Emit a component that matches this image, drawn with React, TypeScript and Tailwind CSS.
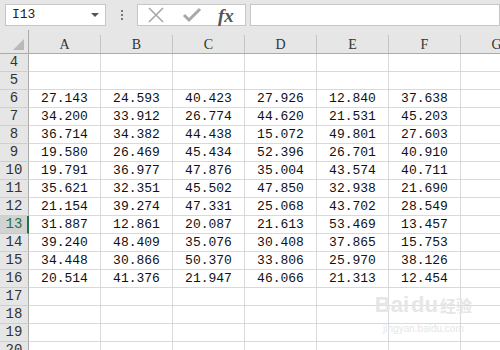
import React from "react";

const cols = ["A", "B", "C", "D", "E", "F", "G"];

const data: Record<number, string[]> = {
  6: ["27.143", "24.593", "40.423", "27.926", "12.840", "37.638"],
  7: ["34.200", "33.912", "26.774", "44.620", "21.531", "45.203"],
  8: ["36.714", "34.382", "44.438", "15.072", "49.801", "27.603"],
  9: ["19.580", "26.469", "45.434", "52.396", "26.701", "40.910"],
  10: ["19.791", "36.977", "47.876", "35.004", "43.574", "40.711"],
  11: ["35.621", "32.351", "45.502", "47.850", "32.938", "21.690"],
  12: ["21.154", "39.274", "47.331", "25.068", "43.702", "28.549"],
  13: ["31.887", "12.861", "20.087", "21.613", "53.469", "13.457"],
  14: ["39.240", "48.409", "35.076", "30.408", "37.865", "15.753"],
  15: ["34.448", "30.866", "50.370", "33.806", "25.970", "38.126"],
  16: ["20.514", "41.376", "21.947", "46.066", "21.313", "12.454"],
};

const rows = Array.from({ length: 17 }, (_, i) => i + 4);

function FormulaBar() {
  return (
    <div className="flex h-[30px] items-start bg-[#e6e6e6] pt-[4px]">
      <div className="ml-[5px] flex h-[22px] w-[101px] items-center justify-between border border-[#c6c6c6] bg-white pl-[6px] pr-[6px]">
        <span className="text-[13px] text-[#222]">I13</span>
        <svg width="8" height="5" viewBox="0 0 8 5">
          <path d="M0 0 L8 0 L4 4 Z" fill="#555" />
        </svg>
      </div>
      <div className="flex h-[22px] w-[31px] flex-col items-center justify-center gap-[2px]">
        <span className="h-[2px] w-[2px] bg-[#777]" />
        <span className="h-[2px] w-[2px] bg-[#777]" />
        <span className="h-[2px] w-[2px] bg-[#777]" />
      </div>
      <div className="flex h-[22px] w-[109px] items-center border border-[#c6c6c6] bg-white pl-[9px]">
        <svg width="18" height="16" viewBox="0 0 18 16">
          <path d="M2 1 L16 15 M16 1 L2 15" stroke="#a8a8a8" strokeWidth="1.6" />
        </svg>
        <svg className="ml-[17px]" width="20" height="16" viewBox="0 0 20 16">
          <path d="M2 8 L7 13 L18 2" stroke="#a8a8a8" strokeWidth="3" fill="none" />
        </svg>
        <span className="ml-[16px] font-['Liberation_Serif',serif] text-[19px] font-bold italic leading-none text-[#555]">
          fx
        </span>
      </div>
      <div className="ml-[4px] h-[22px] flex-1 border border-[#c6c6c6] bg-white" />
    </div>
  );
}

function HeaderRow() {
  return (
    <div className="flex h-[24px] border-b border-[#ababab] bg-[#e6e6e6]">
      <div className="relative w-[29px] shrink-0 border-r border-[#ababab]">
        <svg className="absolute bottom-[3px] right-[4px]" width="11" height="11" viewBox="0 0 11 11">
          <path d="M11 0 L11 11 L0 11 Z" fill="#b9b9b9" />
        </svg>
      </div>
      {cols.map((c) => (
        <div key={c} className="flex w-[72px] shrink-0 items-end">
          <div className="flex h-[18px] flex-1 items-center justify-center font-['Liberation_Serif',serif] text-[14px] text-[#333]">
            {c}
          </div>
          <div className="h-[18px] w-px bg-[#c4c4c4]" />
        </div>
      ))}
    </div>
  );
}

function Row({ n }: { n: number }) {
  const values = data[n] ?? [];
  const active = n === 13;
  return (
    <div className="flex h-[18px]">
      <div
        className={
          active
            ? "flex w-[29px] shrink-0 items-center justify-center border-b border-r-2 border-b-[#c8c8c8] border-r-[#217346] bg-[#d2d2d2] pl-[1px] text-[14px] text-[#217346]"
            : "flex w-[29px] shrink-0 items-center justify-center border-b border-r border-b-[#cfcfcf] border-r-[#ababab] bg-[#e6e6e6] text-[14px] text-[#333]"
        }
      >
        {n}
      </div>
      {cols.map((c, i) => (
        <div
          key={c}
          className="flex w-[72px] shrink-0 items-center justify-center border-b border-r border-[#d9d9d9] bg-white text-[13px] text-[#111]"
        >
          {values[i] ?? ""}
        </div>
      ))}
    </div>
  );
}

export default function App() {
  return (
    <div className="relative h-[350px] w-[500px] overflow-hidden bg-white font-['Liberation_Mono',monospace]">
      <FormulaBar />
      <HeaderRow />
      {rows.map((n) => (
        <Row key={n} n={n} />
      ))}
      <div className="pointer-events-none absolute bottom-[14px] right-[28px] flex flex-col items-center text-[#e6e6e6]">
        <div className="flex items-baseline gap-[2px] font-['Liberation_Sans',sans-serif]">
          <span className="text-[22px] font-bold">Bai</span>
          <span className="text-[22px] font-bold">du</span>
          <span className="font-['Noto_Sans_CJK_SC',sans-serif] text-[16px] font-bold">经验</span>
        </div>
        <span className="font-['Liberation_Sans',sans-serif] text-[10px]">jingyan.baidu.com</span>
      </div>
    </div>
  );
}
